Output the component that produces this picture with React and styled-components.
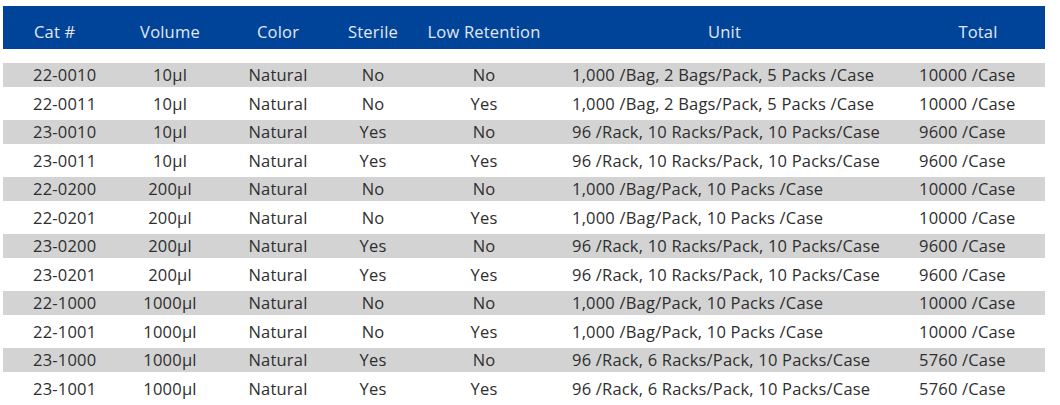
import React from 'react';
import styled, { createGlobalStyle } from 'styled-components';

const GlobalStyle = createGlobalStyle`
  html, body {
    margin: 0;
    padding: 0;
    background: #ffffff;
  }
  body {
    font-family: "Open Sans", "Noto Sans", "Liberation Sans", sans-serif;
  }
`;

const columns = [
  { key: 'cat', title: 'Cat #', width: 117, align: 'left', pad: 30, headPad: 31 },
  { key: 'volume', title: 'Volume', width: 100, align: 'center' },
  { key: 'color', title: 'Color', width: 116, align: 'center' },
  { key: 'sterile', title: 'Sterile', width: 74, align: 'center' },
  { key: 'retention', title: 'Low Retention', width: 148, align: 'center' },
  { key: 'unit', title: 'Unit', width: 353, align: 'left', pad: 14, headShift: 20 },
  { key: 'total', title: 'Total', width: 134, align: 'left', pad: 8 },
];

const rows = [
  ['22-0010', '10µl', 'Natural', 'No', 'No', '1,000 /Bag, 2 Bags/Pack, 5 Packs /Case', '10000 /Case'],
  ['22-0011', '10µl', 'Natural', 'No', 'Yes', '1,000 /Bag, 2 Bags/Pack, 5 Packs /Case', '10000 /Case'],
  ['23-0010', '10µl', 'Natural', 'Yes', 'No', '96 /Rack, 10 Racks/Pack, 10 Packs/Case', '9600 /Case'],
  ['23-0011', '10µl', 'Natural', 'Yes', 'Yes', '96 /Rack, 10 Racks/Pack, 10 Packs/Case', '9600 /Case'],
  ['22-0200', '200µl', 'Natural', 'No', 'No', '1,000 /Bag/Pack, 10 Packs /Case', '10000 /Case'],
  ['22-0201', '200µl', 'Natural', 'No', 'Yes', '1,000 /Bag/Pack, 10 Packs /Case', '10000 /Case'],
  ['23-0200', '200µl', 'Natural', 'Yes', 'No', '96 /Rack, 10 Racks/Pack, 10 Packs/Case', '9600 /Case'],
  ['23-0201', '200µl', 'Natural', 'Yes', 'Yes', '96 /Rack, 10 Racks/Pack, 10 Packs/Case', '9600 /Case'],
  ['22-1000', '1000µl', 'Natural', 'No', 'No', '1,000 /Bag/Pack, 10 Packs /Case', '10000 /Case'],
  ['22-1001', '1000µl', 'Natural', 'No', 'Yes', '1,000 /Bag/Pack, 10 Packs /Case', '10000 /Case'],
  ['23-1000', '1000µl', 'Natural', 'Yes', 'No', '96 /Rack, 6 Racks/Pack, 10 Packs/Case', '5760 /Case'],
  ['23-1001', '1000µl', 'Natural', 'Yes', 'Yes', '96 /Rack, 6 Racks/Pack, 10 Packs/Case', '5760 /Case'],
];

const template = columns.map((c) => `${c.width}px`).join(' ');

const Page = styled.div`
  padding: 6px 0 0 3px;
  width: 1042px;
`;

const HeaderBar = styled.div`
  display: grid;
  grid-template-columns: ${template};
  height: 43px;
  background: #00449a;
  box-sizing: border-box;
  padding-top: 9px;
`;

const HeadCell = styled.div`
  line-height: 33px;
  font-size: 16.5px;
  letter-spacing: 0.2px;
  color: #e3e8f2;
  white-space: nowrap;
  text-align: ${(p) => p.$align};
  padding-left: ${(p) => p.$pad || 0}px;
  padding-right: ${(p) => p.$shift || 0}px;
`;

const Body = styled.div`
  margin-top: 14px;
`;

const Row = styled.div`
  display: grid;
  grid-template-columns: ${template};
  height: ${(p) => (p.$shaded ? 24 : 33)}px;
  background: ${(p) => (p.$shaded ? '#d3d3d3' : 'transparent')};
  align-items: center;
`;

const Cell = styled.div`
  font-size: 16.5px;
  letter-spacing: 0.2px;
  line-height: 24px;
  color: #2e2e2e;
  white-space: nowrap;
  text-align: ${(p) => p.$align};
  padding-left: ${(p) => p.$pad || 0}px;
`;

export default function App() {
  return (
    <>
      <GlobalStyle />
      <Page>
        <HeaderBar>
          {columns.map((c) => (
            <HeadCell
              key={c.key}
              $align={c.align === 'left' && !c.headPad ? 'center' : c.align}
              $pad={c.headPad}
              $shift={c.headShift}
            >
              {c.title}
            </HeadCell>
          ))}
        </HeaderBar>
        <Body>
          {rows.map((r, i) => (
            <Row key={r[0]} $shaded={i % 2 === 0}>
              {r.map((v, j) => (
                <Cell key={columns[j].key} $align={columns[j].align} $pad={columns[j].pad}>
                  {v}
                </Cell>
              ))}
            </Row>
          ))}
        </Body>
      </Page>
    </>
  );
}
